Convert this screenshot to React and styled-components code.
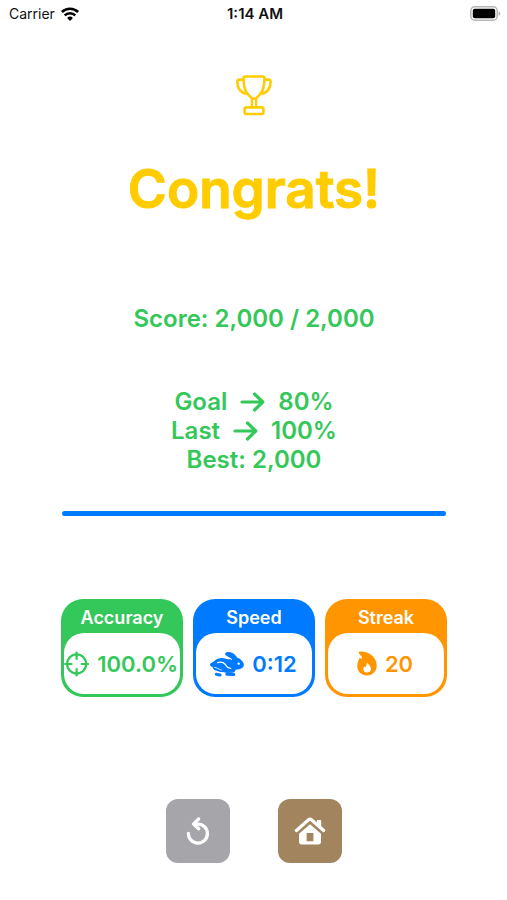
import React from 'react';
import styled, { createGlobalStyle } from 'styled-components';

const GlobalStyle = createGlobalStyle`
  body {
    margin: 0;
    background-color: #ffffff;
    font-family: Inter, "Liberation Sans", sans-serif;
  }
`;

const WifiIcon = () => (
    <svg width="18" height="14" viewBox="0 0 18 14" fill="none" stroke="#000" strokeWidth="2.6" aria-hidden="true">
        <path d="M0.9 5a11.6 11.6 0 0 1 16.2 0" />
        <path d="M3.7 8.4a7.5 7.5 0 0 1 10.6 0" />
        <path d="M9 14 6.1 11a4.1 4.1 0 0 1 5.8 0z" fill="#000" stroke="none" />
    </svg>
);

const BatteryIcon = () => (
    <svg width="31" height="15" viewBox="0 0 31 15" aria-hidden="true">
        <rect x="0.8" y="0.8" width="26.4" height="13.4" rx="4" fill="#fff" stroke="#b5b5b5" strokeWidth="1.5" />
        <rect x="2.8" y="2.8" width="22.4" height="9.4" rx="2" fill="#000" />
        <path d="M28.6 5.2c2.3.8 2.3 3.8 0 4.6z" fill="#b5b5b5" />
    </svg>
);

const TrophyIcon = () => (
    <svg width="36" height="41" viewBox="0 0 36 41" fill="none" stroke="currentColor" strokeWidth="2.6" strokeLinejoin="round" aria-hidden="true">
        <path d="M9.4 1.5H26.600Q28.600 1.500 28.500 3.500C28.400 10.500 27.500 16 23.600 19.900Q21 22.500 19.800 23.600H16.200Q15 22.500 12.400 19.900C8.500 16 7.600 10.500 7.500 3.500Q7.400 1.500 9.400 1.500z" />
        <path d="M7.600 4.600H3.400Q1.400 4.600 1.400 6.800C1.400 13 4.200 17.600 10.500 19M28.400 4.600H32.600Q34.600 4.600 34.600 6.800C34.600 13 31.800 17.600 25.500 19" />
        <path d="M15.900 23.600v8.800M20.100 23.600v8.800" strokeWidth="2.3" />
        <rect x="8.600" y="32.400" width="18.800" height="6.600" rx="1.800" />
    </svg>
);

const ArrowIcon = () => (
    <svg width="25" height="20" viewBox="0 0 25 20" fill="none" stroke="currentColor" strokeWidth="3.2" strokeLinecap="round" strokeLinejoin="round" role="img" aria-label="to">
        <path d="M2 10h20.500M14.500 2l8.300 8-8.300 8" />
    </svg>
);

const ScopeIcon = () => (
    <svg width="26" height="26" viewBox="0 0 26 26" fill="none" stroke="currentColor" strokeWidth="2.3" strokeLinecap="round" aria-hidden="true">
        <circle cx="13" cy="13" r="9.8" />
        <path d="M13 1.2v6.6M13 18.2v6.6M1.200 13h6.600M18.200 13h6.600" />
    </svg>
);

const RabbitIcon = () => (
    <svg width="35" height="26" viewBox="25 33 105 78" fill="none" strokeLinecap="round" strokeLinejoin="round" aria-hidden="true">
        {/* body and head */}
        <path
            d="M29 71C34 66 38 66 42 62C51 53 65 52 78 57C86 59 92 57 97 54C108 50 117 54 122 61C129 67 132 76 127 82C121 89 111 89 105 89C104 95 99 98 92 98L80 98C70 97 60 98 48 92C39 91 36 86 36 81C31 80 26 76 29 71Z"
            fill="currentColor"
        />
        {/* ears */}
        <path d="M73 42C75 34 90 35 100 42C106 46 110 53 111 59L100 62C91 54 76 50 73 42Z" fill="currentColor" />
        <path d="M79 51C86 53 90 56 93 59" stroke="#fff" strokeWidth="3" />
        {/* haunch and foreleg lines */}
        <path d="M51 68C63 63 73 70 77 78C79 82 84 84 90 85" stroke="#fff" strokeWidth="4" />
        <path d="M42 82C49 83 54 88 62 90" stroke="#fff" strokeWidth="2.5" />
        <circle cx="114" cy="71" r="3.500" fill="#fff" />
        {/* feet */}
        <path d="M47 103L58 105" stroke="currentColor" strokeWidth="9" />
        <path d="M79 102L99 103" stroke="currentColor" strokeWidth="10" />
    </svg>
);

const FlameIcon = () => (
    <svg width="20" height="25" viewBox="0 0 20 25" fill="currentColor" aria-hidden="true">
        <path d="M2.800.6C12 .2 19.700 6 19.700 14.500c0 5.800-3.900 9.900-9.700 9.900C4.300 24.400.3 20.700.3 15.600c0-3.400.8-6.200 2-8.200.4-.7 1.200-.6 1.600 0l.6.900c.8-1.500.3-2.700-.8-3.800L2.100 2.500C1.400 1.700 1.700.7 2.800.6z" />
        <path d="M9.700 11.700c2.900 2.100 4.300 4.200 4.300 6.200 0 2.200-1.500 3.500-3.800 3.500-2.300 0-3.900-1.400-3.900-3.400 0-1 .4-1.900.9-2.500l1 .8c1.200-1.200 1.600-2.700 1.500-4.600z" fill="#fff" />
    </svg>
);

const RestartIcon = () => (
    <svg width="24" height="28" viewBox="0 0 24 28" fill="none" stroke="currentColor" strokeWidth="3.3" strokeLinecap="round" strokeLinejoin="round" aria-hidden="true">
        <path d="M2.4 16.400a9.500 9.500 0 1 0 9.600-9.300H8.500" />
        <path d="M12.600 2 7.600 7l5 4.800" />
    </svg>
);

const HomeIcon = () => (
    <svg width="32" height="28" viewBox="0 0 32 28" fill="currentColor" aria-hidden="true">
        <path d="M2.4 13.400 14.600 2.800q1.400-1.200 2.800 0L29.600 13.400" fill="none" stroke="currentColor" strokeWidth="3.3" strokeLinecap="round" />
        <path d="M22.800 3.800q0-.8.800-.8h2.800q.8 0 .8.800v7.400l-4.400-3.800z" />
        <path fillRule="evenodd" d="M16 7.300 27 16.800v8q0 2.700-2.700 2.700H7.700Q5 27.500 5 24.800v-8zM12.600 16v8.300h6.800V16z" />
    </svg>
);

const StatCard = ({ label, value, color, icon }) => (
    <Card color={color}>
        <CardTitle>{label}</CardTitle>
        <CardBody>
            {icon}
            <span>{value}</span>
        </CardBody>
    </Card>
);

const App = () => {
    return (
        <Screen>
            <GlobalStyle />
            <StatusBar>
                <Carrier>
                    Carrier
                    <WifiIcon />
                </Carrier>
                <Clock>1:14 AM</Clock>
                <Battery>
                    <BatteryIcon />
                </Battery>
            </StatusBar>
            <Main>
                <Hero>
                    <TrophyIcon />
                    <Title>Congrats!</Title>
                </Hero>
                <Score>Score: 2,000 / 2,000</Score>
                <Results>
                    <ResultRow>
                        Goal
                        <ArrowIcon />
                        80%
                    </ResultRow>
                    <ResultRow>
                        Last
                        <ArrowIcon />
                        100%
                    </ResultRow>
                    <ResultRow>Best: 2,000</ResultRow>
                </Results>
                <Divider />
                <Stats>
                    <StatCard label="Accuracy" value="100.0%" color="#34c759" icon={<ScopeIcon />} />
                    <StatCard label="Speed" value="0:12" color="#007aff" icon={<RabbitIcon />} />
                    <StatCard label="Streak" value="20" color="#ff9500" icon={<FlameIcon />} />
                </Stats>
                <Actions>
                    <ActionButton color="#a5a5aa" aria-label="Restart">
                        <RestartIcon />
                    </ActionButton>
                    <ActionButton color="#a2845e" aria-label="Home">
                        <HomeIcon />
                    </ActionButton>
                </Actions>
            </Main>
        </Screen>
    );
};

export default App;

const Screen = styled.div`
  min-height: 100vh;
  background-color: #ffffff;
`;

const StatusBar = styled.header`
  display: grid;
  grid-template-columns: 1fr auto 1fr;
  align-items: center;
  height: 27px;
  padding: 0 6px 0 9px;
  font-size: 14px;
  color: #111111;
`;

const Carrier = styled.div`
  display: flex;
  align-items: center;
  gap: 6px;
`;

const Clock = styled.div`
  font-size: 15px;
  font-weight: 600;
`;

const Battery = styled.div`
  display: flex;
  justify-content: flex-end;
`;

const Main = styled.main`
  display: flex;
  flex-direction: column;
  padding: 48px 60px 37px 61px;
`;

const Hero = styled.div`
  display: flex;
  flex-direction: column;
  align-items: center;
  gap: 41px;
  color: #ffcc00;
`;

const Title = styled.h1`
  margin: 0;
  font-size: 53px;
  font-weight: 600;
  line-height: 64px;
  -webkit-text-stroke: 1px currentColor;
  stroke-linejoin: round;
`;

const Score = styled.p`
  margin: 83px 0 0;
  font-size: 24px;
  font-weight: 600;
  line-height: 30px;
  text-align: center;
  color: #34c759;
`;

const Results = styled.div`
  margin-top: 53px;
  color: #34c759;
`;

const ResultRow = styled.div`
  display: flex;
  align-items: center;
  justify-content: center;
  gap: 13px;
  font-size: 24px;
  font-weight: 600;
  line-height: 29px;
`;

const Divider = styled.hr`
  align-self: stretch;
  height: 5px;
  margin: 37px 1px 0;
  border: none;
  border-radius: 3px;
  background-color: #007aff;
`;

const Stats = styled.section`
  display: grid;
  grid-template-columns: repeat(3, minmax(0, 1fr));
  gap: 10px;
  margin-top: 83px;
`;

const Card = styled.div`
  padding: 0 3px 3px;
  border-radius: 22px;
  color: ${({ color }) => color};
  background-color: ${({ color }) => color};
`;

const CardTitle = styled.h2`
  margin: 0;
  padding: 7px 0 3px;
  font-size: 18px;
  font-weight: 600;
  line-height: 24px;
  text-align: center;
  color: #ffffff;
`;

const CardBody = styled.div`
  display: flex;
  align-items: center;
  justify-content: center;
  gap: 8px;
  height: 61px;
  padding-right: 2px;
  border-radius: 20px;
  font-size: 22px;
  font-weight: 600;
  white-space: nowrap;
  background-color: #ffffff;
`;

const Actions = styled.div`
  display: flex;
  justify-content: center;
  gap: 48px;
  margin-top: 102px;
`;

const ActionButton = styled.button`
  display: flex;
  align-items: center;
  justify-content: center;
  width: 64px;
  height: 64px;
  padding: 0;
  border: none;
  border-radius: 12px;
  color: #ffffff;
  background-color: ${({ color }) => color};
  cursor: pointer;
`;
